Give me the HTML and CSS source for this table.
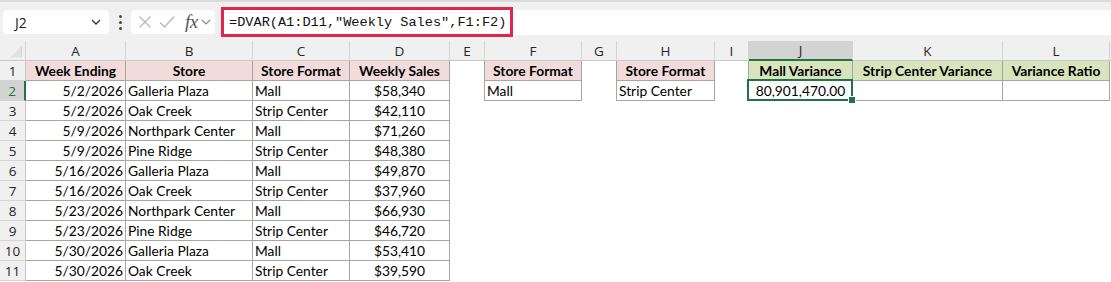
FILE: index.html
```html
<!DOCTYPE html>
<html lang="en">
<head>
<meta charset="utf-8">
<title>DVAR</title>
<link rel="stylesheet" href="styles.css">
</head>
<body>
<div class="app">
  <div class="fbar">
    <div class="namebox">
      <span class="nb-text">J2</span>
      <svg class="chev" width="10" height="6" viewBox="0 0 10 6"><polyline points="1,1 5,5 9,1" fill="none" stroke="#333" stroke-width="1.3"/></svg>
    </div>
    <div class="dots"><i></i><i></i><i></i></div>
    <div class="fnbox">
      <svg width="14" height="14" viewBox="0 0 14 14"><path d="M1.5 1.5 L12.5 12.5 M12.5 1.5 L1.5 12.5" stroke="#b8b8b8" stroke-width="1.3" fill="none"/></svg>
      <svg width="16" height="14" viewBox="0 0 16 14"><polyline points="1,7.5 5.5,12 15,1.5" stroke="#b8b8b8" stroke-width="1.3" fill="none"/></svg>
      <span class="fx">fx</span>
      <svg class="chev2" width="10" height="6" viewBox="0 0 10 6"><polyline points="1,1 5,5 9,1" fill="none" stroke="#8a8a8a" stroke-width="1.2"/></svg>
    </div>
    <div class="finput">
      <span class="formula">=DVAR(A1:D11,"Weekly Sales",F1:F2)</span>
    </div>
  </div>

  <div class="sheet">
    <div class="ch corner"><svg width="11" height="11" viewBox="0 0 11 11"><polygon points="11,0 11,11 0,11" fill="#d6d6d6"/><path d="M3 11V8M5 11V6M7 11V4M9 11V2" stroke="#eeeeee" stroke-width="1"/></svg></div>
    <div class="ch">A</div><div class="ch">B</div><div class="ch">C</div><div class="ch">D</div><div class="ch">E</div><div class="ch">F</div><div class="ch">G</div><div class="ch">H</div><div class="ch">I</div><div class="ch sel">J</div><div class="ch">K</div><div class="ch">L</div><div class="ch last"></div>

    <div class="rh">1</div>
    <div class="t hp">Week Ending</div><div class="t hp">Store</div><div class="t hp">Store Format</div><div class="t hp">Weekly Sales</div>
    <div class="c br"></div><div class="t hp">Store Format</div><div class="c br"></div><div class="t hp">Store Format</div><div class="c br"></div>
    <div class="t hg">Mall Variance</div><div class="t hg">Strip Center Variance</div><div class="t hg">Variance Ratio</div><div class="c"></div>

    <div class="rh rsel">2</div>
    <div class="t r">5/2/2026</div><div class="t">Galleria Plaza</div><div class="t">Mall</div><div class="t m">$58,340</div>
    <div class="c br"></div><div class="t">Mall</div><div class="c br"></div><div class="t">Strip Center</div><div class="c br"></div>
    <div class="t m active">80,901,470.00</div><div class="t"></div><div class="t"></div><div class="c"></div>

    <div class="rh">3</div>
    <div class="t r">5/2/2026</div><div class="t">Oak Creek</div><div class="t">Strip Center</div><div class="t m">$42,110</div>
    <div class="c rest"></div>

    <div class="rh">4</div>
    <div class="t r">5/9/2026</div><div class="t">Northpark Center</div><div class="t">Mall</div><div class="t m">$71,260</div>
    <div class="c rest"></div>

    <div class="rh">5</div>
    <div class="t r">5/9/2026</div><div class="t">Pine Ridge</div><div class="t">Strip Center</div><div class="t m">$48,380</div>
    <div class="c rest"></div>

    <div class="rh">6</div>
    <div class="t r">5/16/2026</div><div class="t">Galleria Plaza</div><div class="t">Mall</div><div class="t m">$49,870</div>
    <div class="c rest"></div>

    <div class="rh">7</div>
    <div class="t r">5/16/2026</div><div class="t">Oak Creek</div><div class="t">Strip Center</div><div class="t m">$37,960</div>
    <div class="c rest"></div>

    <div class="rh">8</div>
    <div class="t r">5/23/2026</div><div class="t">Northpark Center</div><div class="t">Mall</div><div class="t m">$66,930</div>
    <div class="c rest"></div>

    <div class="rh">9</div>
    <div class="t r">5/23/2026</div><div class="t">Pine Ridge</div><div class="t">Strip Center</div><div class="t m">$46,720</div>
    <div class="c rest"></div>

    <div class="rh">10</div>
    <div class="t r">5/30/2026</div><div class="t">Galleria Plaza</div><div class="t">Mall</div><div class="t m">$53,410</div>
    <div class="c rest"></div>

    <div class="rh">11</div>
    <div class="t r">5/30/2026</div><div class="t">Oak Creek</div><div class="t">Strip Center</div><div class="t m">$39,590</div>
    <div class="c rest"></div>
  </div>
</div>
</body>
</html>
```

FILE: styles.css
```css
* { box-sizing: border-box; margin: 0; padding: 0; }

html, body {
  width: 1111px;
  height: 282px;
  overflow: hidden;
  background: #ffffff;
}

.app {
  width: 1111px;
  font-family: "Lato", "Liberation Sans", sans-serif;
  color: #000;
}

/* ---------- formula bar ---------- */
.fbar {
  height: 41px;
  background: #f0f0f0;
  border-top: 2px solid #dadada;
  display: flex;
  align-items: center;
  padding: 1px 0 0 3px;
}

.namebox {
  width: 106px;
  height: 24px;
  background: #fff;
  border-radius: 4px;
  display: flex;
  align-items: center;
  justify-content: space-between;
  padding: 0 8px 0 12px;
}

.nb-text {
  font-family: "Open Sans", "Noto Sans", sans-serif;
  font-size: 14px;
  color: #222;
}

.dots {
  width: 22px;
  display: flex;
  flex-direction: column;
  align-items: center;
  gap: 3px;
}
.dots i {
  display: block;
  width: 3px;
  height: 3px;
  border-radius: 50%;
  background: #4a4a3a;
}

.fnbox {
  width: 84px;
  height: 24px;
  background: #fff;
  border-radius: 4px;
  display: flex;
  align-items: center;
  padding: 0 0 0 7px;
  gap: 7px;
}
.fx {
  font-family: "Liberation Serif", "DejaVu Serif", serif;
  font-style: italic;
  font-size: 19px;
  color: #555;
  margin-left: 3px;
  letter-spacing: -0.5px;
}
.chev2 { margin-left: -4px; }

.finput {
  flex: 1;
  height: 25px;
  margin-left: 6px;
  background: #fff;
  display: flex;
  align-items: center;
}

.formula {
  display: inline-flex;
  align-items: center;
  height: 30px;
  width: 292px;
  border: 3px solid #e2254f;
  padding-left: 5px;
  font-family: "Liberation Mono", "DejaVu Sans Mono", monospace;
  font-size: 13.6px;
  color: #111;
  white-space: pre;
}

/* ---------- sheet grid ---------- */
.sheet {
  display: grid;
  grid-template-columns: 26px 100px 127px 97px 100px 35px 97px 35px 98px 34px 104px 150px 107px 1fr;
  grid-auto-rows: 20px;
  font-size: 13.8px;
}

.sheet > div {
  display: flex;
  align-items: center;
  white-space: nowrap;
  overflow: visible;
}

.ch {
  background: #f0f0f0;
  border-right: 1px solid #d4d4d4;
  border-bottom: 1px solid #c8c8c8;
  justify-content: center;
  font-family: "Open Sans", "Noto Sans", sans-serif;
  font-size: 13.5px;
  color: #262626;
}
.ch.sel {
  background: #d3d3d3;
  border-bottom: 2px solid #217346;
}
.ch.last { border-right: none; }
.corner {
  justify-content: flex-end !important;
  align-items: flex-end !important;
  padding: 0 3px 3px 0;
}

.rh {
  background: #f0f0f0;
  border-right: 1px solid #c8c8c8;
  border-bottom: 1px solid #d4d4d4;
  justify-content: center;
  font-family: "Open Sans", "Noto Sans", sans-serif;
  font-size: 13.5px;
  color: #262626;
}
.rh.rsel {
  background: #d3d3d3;
  color: #217346;
  border-right: 2px solid #217346;
}

.t {
  border-right: 1px solid #a6a6a6;
  border-bottom: 1px solid #a6a6a6;
  padding: 0 2px;
}
.t.r { justify-content: flex-end; }
.t.m { justify-content: center; }

.hp {
  background: #f2dcdb;
  font-weight: bold;
  justify-content: center;
}
.hg {
  background: #d8e4bc;
  font-weight: bold;
  justify-content: center;
}

.c.br { border-right: 1px solid #a6a6a6; }
.c.rest { grid-column: 6 / -1; }

.active { position: relative; }
.active::after {
  content: "";
  position: absolute;
  left: -2px;
  top: -2px;
  right: -1px;
  bottom: -1px;
  border: 2px solid #217346;
}
.active::before {
  content: "";
  position: absolute;
  right: -4px;
  bottom: -4px;
  width: 6px;
  height: 6px;
  background: #217346;
  border: 1px solid #fff;
  z-index: 2;
}
```
